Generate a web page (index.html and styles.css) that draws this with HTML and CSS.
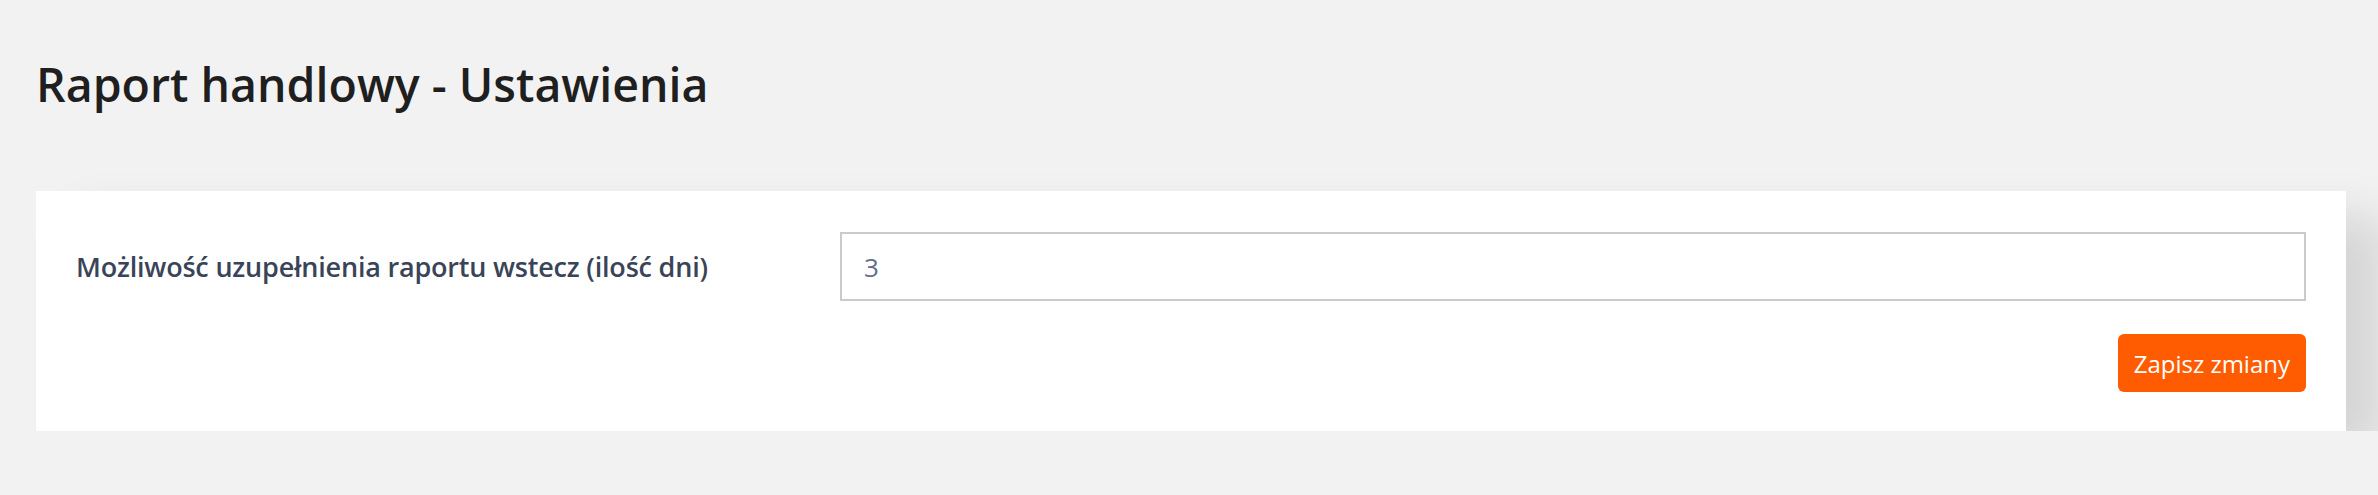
FILE: index.html
```html
<!DOCTYPE html>
<html lang="pl">
<head>
<meta charset="utf-8">
<title>Raport handlowy - Ustawienia</title>
<link rel="stylesheet" href="styles.css">
</head>
<body>
<div class="page">
  <h1 class="page-title">Raport handlowy - Ustawienia</h1>
  <form class="card">
    <div class="form-row">
      <label class="form-label" for="days">Możliwość uzupełnienia raportu wstecz (ilość dni)</label>
      <input class="form-input" id="days" type="text" value="3">
    </div>
    <div class="form-actions">
      <button class="btn-save" type="button">Zapisz zmiany</button>
    </div>
  </form>
</div>
</body>
</html>
```

FILE: styles.css
```css
html, body {
  margin: 0;
  padding: 0;
  background: #f2f2f2;
}

body {
  font-family: "Open Sans", "Noto Sans", "Liberation Sans", sans-serif;
}

.page {
  padding: 0 32px 0 36px;
}

.page-title {
  margin: 0;
  padding-top: 57px;
  font-size: 46.5px;
  line-height: 55px;
  font-weight: 600;
  color: #1f1f1f;
}

.card {
  margin-top: 79px;
  background: #ffffff;
  padding: 41px 40px 39px 40px;
  box-shadow: 40px 25px 45px rgba(0, 0, 0, 0.12);
}

.form-row {
  display: grid;
  grid-template-columns: 764px 1fr;
  align-items: center;
}

.form-label {
  font-size: 27px;
  font-weight: 600;
  color: #3a4459;
  letter-spacing: -0.2px;
}

.form-input {
  box-sizing: border-box;
  height: 69px;
  width: 100%;
  border: 2px solid #cbcbcb;
  border-radius: 0;
  padding: 0 22px;
  font-family: inherit;
  font-size: 26px;
  color: #5f6f8c;
  background: #fff;
  outline: none;
}

.form-actions {
  display: flex;
  justify-content: flex-end;
  margin-top: 33px;
}

.btn-save {
  height: 58px;
  padding: 0 16px;
  border: none;
  border-radius: 6px;
  background: #ff5b00;
  color: #ffffff;
  font-family: inherit;
  font-size: 24px;
  font-weight: 400;
  cursor: pointer;
}
```
